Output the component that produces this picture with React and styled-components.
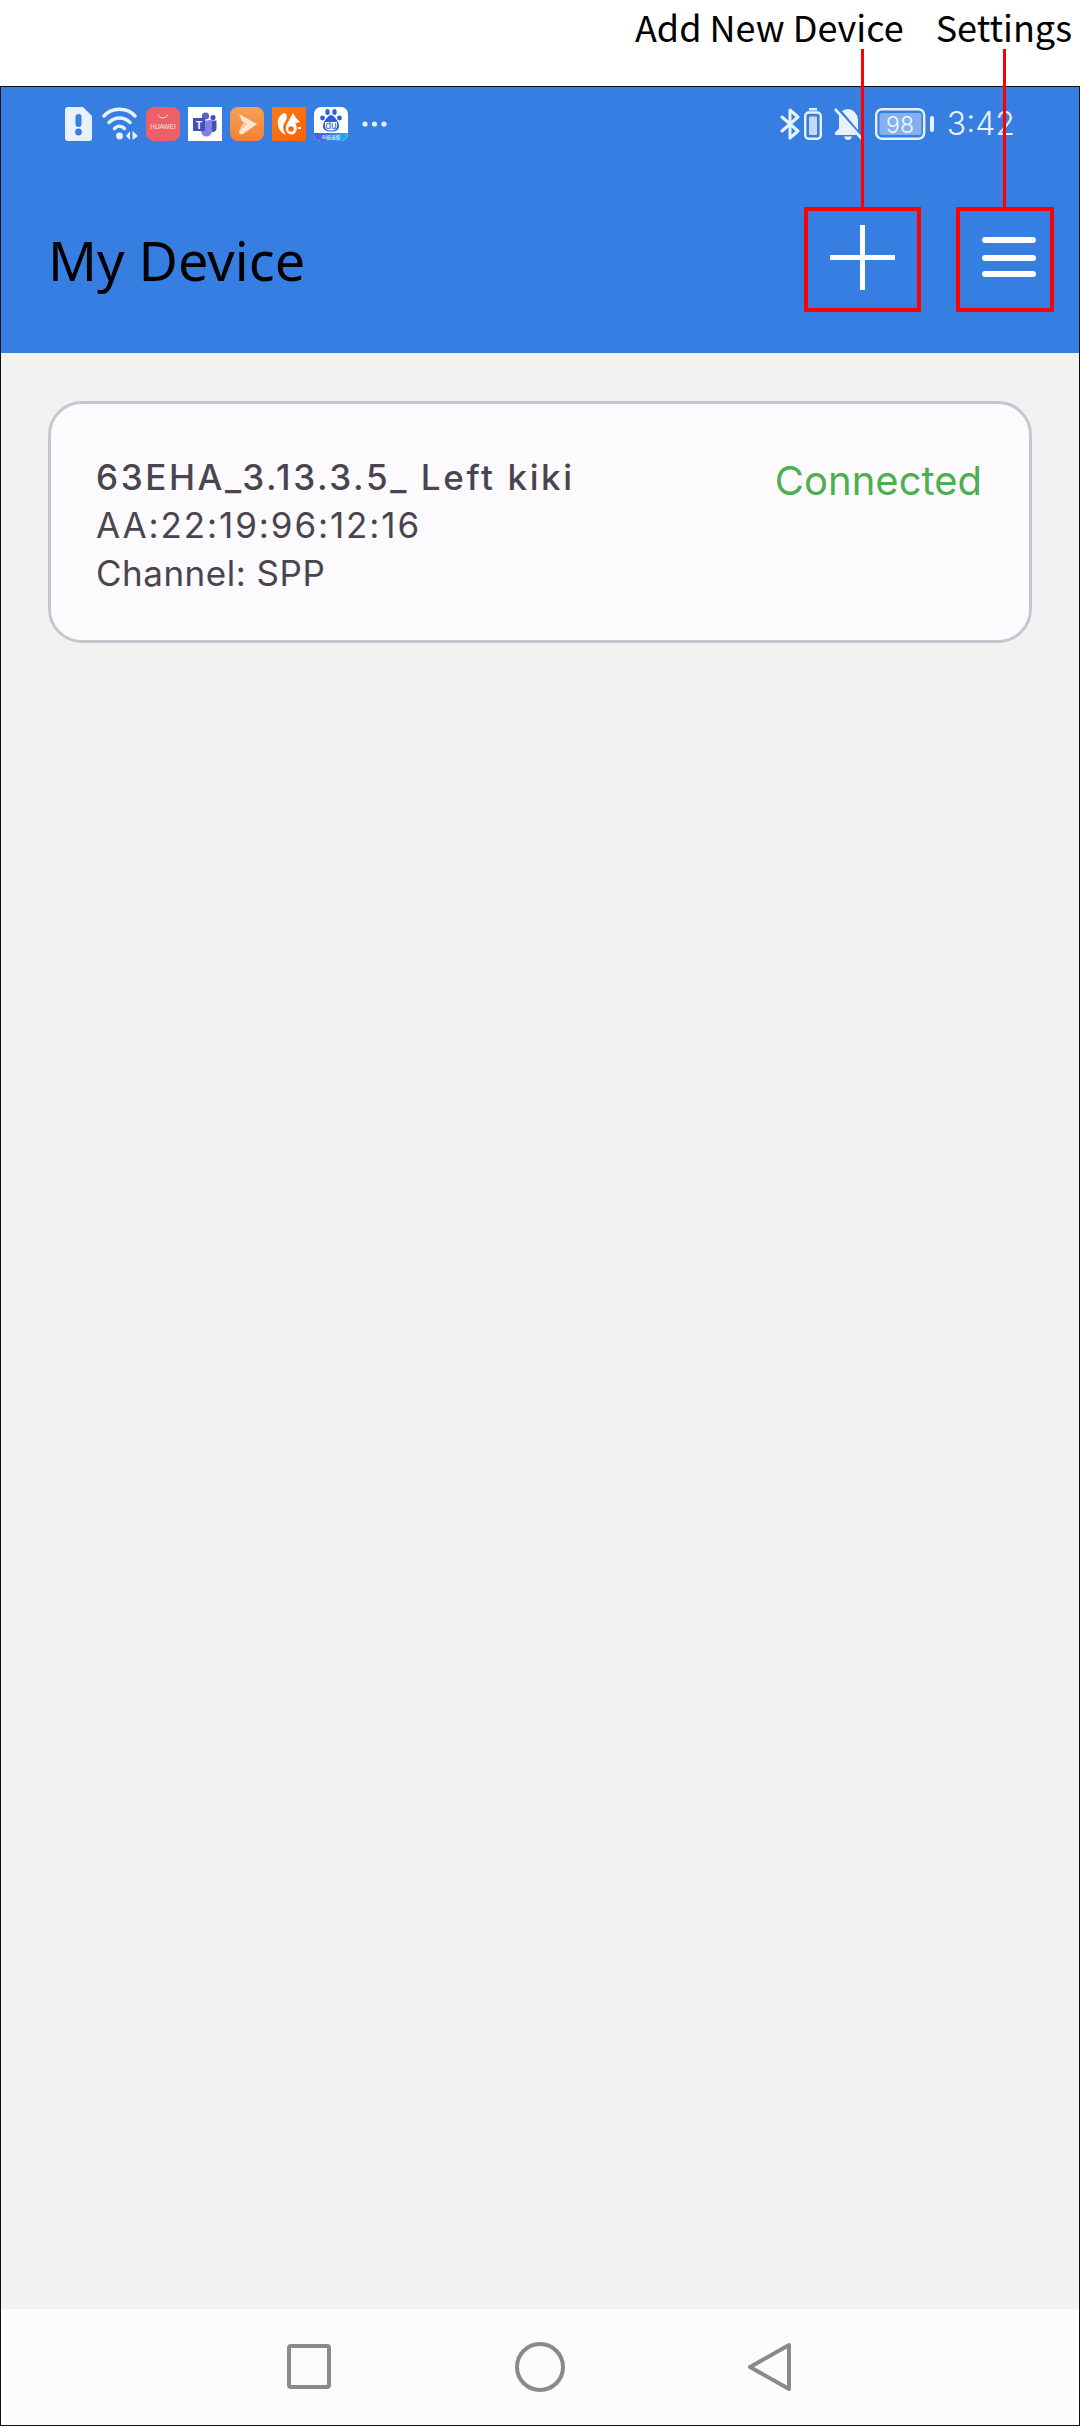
import React from 'react'
import styled, { createGlobalStyle } from 'styled-components'

const GlobalStyle = createGlobalStyle`
  html, body {
    margin: 0;
    padding: 0;
    background: #fff;
  }
  * {
    box-sizing: border-box;
  }
`

const Page = styled.div`
  display: flex;
  flex-direction: column;
  width: 1080px;
  height: 2426px;
  background: #fff;
  overflow: hidden;
`

const CalloutBand = styled.div`
  display: flex;
  justify-content: flex-end;
  gap: 32px;
  height: 86px;
  padding: 1px 8px 0 0;
  flex-shrink: 0;
`

const CalloutLabel = styled.div`
  font-family: "Noto Sans CJK SC", "Noto Sans", sans-serif;
  font-size: 36px;
  line-height: 50px;
  color: #000;
  white-space: nowrap;
`

const Screen = styled.div`
  display: flex;
  flex-direction: column;
  flex: 1;
  min-height: 0;
  border: 1.5px solid #111;
  background: #f2f2f2;
`

const Header = styled.header`
  background: #377ee3;
  height: 266px;
  flex-shrink: 0;
  display: flex;
  flex-direction: column;
`

const StatusBar = styled.div`
  display: flex;
  align-items: center;
  justify-content: space-between;
  height: 34px;
  margin-top: 20px;
  padding: 0 64px 0 64px;
`

const StatusGroup = styled.div`
  display: flex;
  align-items: center;
  gap: ${props => props.$gap || 0}px;
`

const DotsSlot = styled.div`
  display: flex;
  margin-left: 6px;
`

const Clock = styled.span`
  font-family: Inter, "Noto Sans", sans-serif;
  font-size: 32px;
  font-weight: 300;
  line-height: 34px;
  color: #e8f1fc;
  margin-left: 1px;
`

const AppBar = styled.div`
  display: flex;
  align-items: center;
  justify-content: space-between;
  margin-top: 66px;
  padding: 0 25px 0 47px;
`

const Title = styled.h1`
  margin: 0;
  font-family: "Noto Sans", sans-serif;
  font-size: 54px;
  font-weight: 400;
  line-height: 58px;
  color: #000;
`

const Actions = styled.div`
  display: flex;
  gap: 35px;
`

const ActionButton = styled.div`
  position: relative;
  display: flex;
  align-items: center;
  justify-content: center;
  width: ${props => props.$width}px;
  height: 105px;
  padding: 0 0 5px ${props => props.$shift || 0}px;
  border: 4px solid #f00;
`

const Connector = styled.span`
  position: absolute;
  left: 50%;
  bottom: 100%;
  width: 3px;
  height: 158px;
  margin-left: -2px;
  margin-bottom: 4px;
  background: #f00;
`

const Content = styled.main`
  flex: 1;
  padding: 48px 47px 0 47px;
`

const Card = styled.section`
  display: flex;
  justify-content: space-between;
  align-items: flex-start;
  height: 242px;
  padding: 49px 47px 0 45px;
  background: #fdfafe;
  border: 3px solid #c9c5d0;
  border-radius: 34px;
`

const CardInfo = styled.div`
  display: flex;
  flex-direction: column;
`

const DeviceName = styled.div`
  font-family: Inter, "Noto Sans", sans-serif;
  font-size: 35px;
  font-weight: 500;
  line-height: 48px;
  letter-spacing: 2.6px;
  color: #49454f;
`

const DeviceMeta = styled.div`
  font-family: Inter, "Noto Sans", sans-serif;
  font-size: 35px;
  font-weight: 400;
  line-height: 48px;
  letter-spacing: ${props => props.$spacing || 0}px;
  color: #49454f;
`

const DeviceStatus = styled.div`
  font-family: Inter, "Noto Sans", sans-serif;
  font-size: 40px;
  font-weight: 400;
  line-height: 56px;
  color: #4caf50;
`

const NavBar = styled.nav`
  display: flex;
  align-items: center;
  justify-content: center;
  gap: 183px;
  height: 116px;
  flex-shrink: 0;
  background: #fcfcfc;
`

const AlertIcon = () => (
  <svg width="27" height="34" viewBox="0 0 27 34">
    <path d="M3 0H18L27 9V31a3 3 0 0 1-3 3H3a3 3 0 0 1-3-3V3a3 3 0 0 1 3-3Z" fill="#e8f1fc" />
    <rect x="10.5" y="7" width="6" height="13" rx="3" fill="#377ee3" />
    <circle cx="13.5" cy="25" r="3.4" fill="#377ee3" />
  </svg>
)

const WifiIcon = () => (
  <svg width="36" height="34" viewBox="0 0 36 34" fill="none">
    <path d="M2 9C10 0 25 0 33 9" stroke="#e8f1fc" strokeWidth="3.4" strokeLinecap="round" />
    <path d="M7 15.5C13 9.5 22 9.5 28 15.5" stroke="#e8f1fc" strokeWidth="3.4" strokeLinecap="round" />
    <path d="M12.5 21.5C15.5 18.5 19.5 18.5 22.5 21.5" stroke="#e8f1fc" strokeWidth="3.4" strokeLinecap="round" />
    <circle cx="17.5" cy="29" r="3.4" fill="#e8f1fc" />
    <path d="M28 24V33L24 29Z M30.5 24V33L36 29Z" fill="#e8f1fc" />
  </svg>
)

const HuaweiIcon = () => (
  <svg width="34" height="34" viewBox="0 0 34 34">
    <rect width="34" height="34" rx="8" fill="#ee5f68" />
    <path d="M12 7.5C13 12 21 12 22 7.5" stroke="#fbe3e4" strokeWidth="1" fill="none" />
    <text x="17" y="22" textAnchor="middle" fontFamily="Liberation Sans, sans-serif" fontSize="6.4" fill="#fbe3e4">HUAWEI</text>
  </svg>
)

const TeamsIcon = () => (
  <svg width="34" height="34" viewBox="0 0 34 34">
    <rect width="34" height="34" fill="#fff" />
    <circle cx="17.5" cy="9" r="3.6" fill="#5a62c4" />
    <circle cx="25" cy="10.5" r="2.6" fill="#4a52b0" />
    <path d="M20 13.5H28.5V21a4 4 0 0 1-8 0Z" fill="#4a52b0" />
    <path d="M13 13.5H24V24a5.5 5.5 0 0 1-11 0Z" fill="#7b83eb" />
    <rect x="5" y="11" width="12" height="13" fill="#464eb8" />
    <text x="11" y="21.5" textAnchor="middle" fontFamily="Liberation Sans, sans-serif" fontSize="10" fontWeight="700" fill="#fff">T</text>
  </svg>
)

const PlayIcon = () => (
  <svg width="34" height="34" viewBox="0 0 34 34">
    <defs>
      <linearGradient id="playBg" x1="0" y1="0" x2="0" y2="1">
        <stop offset="0" stopColor="#f7a05a" />
        <stop offset="1" stopColor="#f4812f" />
      </linearGradient>
    </defs>
    <rect width="34" height="34" rx="8" fill="url(#playBg)" />
    <path d="M9 7L27 17L13 27Q9 28 9 24L17 17L12 14Z" fill="#fde6d4" />
    <path d="M9 24L14 14L17 17Z" fill="#fbc9a5" />
  </svg>
)

const SquirrelIcon = () => (
  <svg width="34" height="34" viewBox="0 0 34 34">
    <defs>
      <linearGradient id="squirrelBg" x1="0" y1="0" x2="1" y2="1">
        <stop offset="0" stopColor="#f57c1f" />
        <stop offset="1" stopColor="#ff5f00" />
      </linearGradient>
    </defs>
    <rect width="34" height="34" fill="url(#squirrelBg)" />
    <path d="M13 6C8 7 5 12 6 18C7 24 11 27 14 28C11 23 10 19 13 15C15 13 16 8 13 6Z" fill="#fff" />
    <path d="M15 17L21 6L24 11L28 15L23 16.5C26 20 25 25 22 27C18 28.5 14 26 14 21.5C14 19.5 14 18 15 17Z" fill="#fff" />
    <circle cx="19" cy="22" r="2.8" fill="#f86b08" />
    <rect x="26" y="20" width="3" height="2" fill="#fff" />
  </svg>
)

const BaiduIcon = () => (
  <svg width="34" height="34" viewBox="0 0 34 34">
    <defs>
      <clipPath id="baiduClip">
        <rect width="34" height="34" rx="7" />
      </clipPath>
      <linearGradient id="baiduBand" x1="0" y1="0" x2="1" y2="0">
        <stop offset="0" stopColor="#4a55e8" />
        <stop offset="1" stopColor="#18b4f2" />
      </linearGradient>
    </defs>
    <g clipPath="url(#baiduClip)">
      <rect width="34" height="34" fill="#fff" />
      <rect y="26" width="34" height="8" fill="url(#baiduBand)" />
      <ellipse cx="13.5" cy="5" rx="2.2" ry="3" fill="#2a5fe0" />
      <ellipse cx="20.5" cy="5" rx="2.2" ry="3" fill="#2a5fe0" />
      <circle cx="8.5" cy="11" r="2.4" fill="#2a5fe0" />
      <circle cx="25.5" cy="11" r="2.4" fill="#2a5fe0" />
      <path d="M17 8C20 8 25 15 25 19C25 23 22 24.5 17 24.5C12 24.5 9 23 9 19C9 15 14 8 17 8Z" fill="#2a5fe0" />
      <path d="M11 15H23V19C23 22 21 23.5 17 23.5C13 23.5 11 22 11 19Z" fill="#fff" />
      <text x="17" y="22" textAnchor="middle" fontFamily="Liberation Sans, sans-serif" fontSize="10" fill="#2a5fe0">du</text>
      <text x="17" y="32" textAnchor="middle" fontFamily="Noto Sans CJK SC, sans-serif" fontSize="4.8" fill="#fff">AI极速版</text>
    </g>
  </svg>
)

const MoreDots = () => (
  <svg width="25" height="6" viewBox="0 0 25 6">
    <circle cx="3" cy="3" r="2.6" fill="#e8f1fc" />
    <circle cx="12.5" cy="3" r="2.6" fill="#e8f1fc" />
    <circle cx="22" cy="3" r="2.6" fill="#e8f1fc" />
  </svg>
)

const BluetoothIcon = () => (
  <svg width="20" height="32" viewBox="0 0 20 32" fill="none" stroke="#e8f1fc" strokeWidth="3" strokeLinejoin="round" strokeLinecap="round">
    <path d="M2 9L18 23L10 30V2L18 9L2 23" />
  </svg>
)

const SmallBattery = () => (
  <svg width="18" height="32" viewBox="0 0 18 32" fill="none">
    <rect x="5" y="0" width="8" height="2.5" fill="#e8f1fc" />
    <rect x="1.2" y="4.5" width="15.6" height="26.3" rx="3.5" stroke="#e8f1fc" strokeWidth="2.4" />
    <rect x="5" y="8.5" width="8" height="18.5" rx="1" fill="#c4d9f7" />
  </svg>
)

const MutedBell = () => (
  <svg width="29" height="32" viewBox="0 0 29 32">
    <path d="M2 0L29 30L27 32L0 2Z" fill="#e8f1fc" />
    <path d="M5 6L23 27H1V24.5L5 20.5Z" fill="#e8f1fc" />
    <path d="M8 3Q11 1 14 1Q23 2 24 12V22Z" fill="#e8f1fc" />
    <path d="M10 28.5H18Q17 32 14 32Q11 32 10 28.5Z" fill="#e8f1fc" />
  </svg>
)

const BatteryIcon = () => (
  <svg width="59" height="32" viewBox="0 0 59 32">
    <rect x="1.2" y="1.2" width="48" height="29.6" rx="6" fill="none" stroke="#e8f1fc" strokeWidth="2.4" />
    <rect x="4.5" y="5" width="42" height="22" rx="2.5" fill="#85b0ef" />
    <rect x="55" y="8" width="4" height="16" rx="2" fill="#e8f1fc" />
    <text x="25" y="24.5" textAnchor="middle" fontFamily="Inter, sans-serif" fontSize="23" fontWeight="300" fill="#f2f7fe">98</text>
  </svg>
)

const PlusIcon = () => (
  <svg width="65" height="65" viewBox="0 0 65 65">
    <rect x="30" y="0" width="5" height="65" fill="#fff" />
    <rect x="0" y="30" width="65" height="5" fill="#fff" />
  </svg>
)

const MenuIcon = () => (
  <svg width="54" height="40" viewBox="0 0 54 40">
    <rect y="0" width="54" height="6" rx="3" fill="#fff" />
    <rect y="18" width="54" height="6" rx="3" fill="#fff" />
    <rect y="34" width="54" height="6" rx="3" fill="#fff" />
  </svg>
)

const NavIcon = ({ kind }) => (
  <svg width="50" height="50" viewBox="0 0 50 50" fill="none" stroke="#8a8a8a" strokeWidth="4" strokeLinejoin="round">
    {kind === 'square' && <rect x="7" y="4" width="40" height="41" rx="2" />}
    {kind === 'circle' && <circle cx="25" cy="25" r="23" />}
    {kind === 'back' && <path d="M41 3V47L2 25Z" />}
  </svg>
)

export default function App() {
  return (
    <Page>
      <GlobalStyle />
      <CalloutBand>
        <CalloutLabel>Add New Device</CalloutLabel>
        <CalloutLabel>Settings</CalloutLabel>
      </CalloutBand>
      <Screen>
        <Header>
          <StatusBar>
            <StatusGroup $gap={8}>
              <StatusGroup $gap={10}>
                <AlertIcon />
                <WifiIcon />
              </StatusGroup>
              <HuaweiIcon />
              <TeamsIcon />
              <PlayIcon />
              <SquirrelIcon />
              <BaiduIcon />
              <DotsSlot>
                <MoreDots />
              </DotsSlot>
            </StatusGroup>
            <StatusGroup $gap={12}>
              <StatusGroup $gap={4}>
                <BluetoothIcon />
                <SmallBattery />
              </StatusGroup>
              <MutedBell />
              <BatteryIcon />
              <Clock>3:42</Clock>
            </StatusGroup>
          </StatusBar>
          <AppBar>
            <Title>My Device</Title>
            <Actions>
              <ActionButton $width={117}>
                <Connector />
                <PlusIcon />
              </ActionButton>
              <ActionButton $width={98} $shift={8}>
                <Connector />
                <MenuIcon />
              </ActionButton>
            </Actions>
          </AppBar>
        </Header>
        <Content>
          <Card>
            <CardInfo>
              <DeviceName>63EHA_3.13.3.5_ Left kiki</DeviceName>
              <DeviceMeta $spacing={1.9}>AA:22:19:96:12:16</DeviceMeta>
              <DeviceMeta $spacing={0.5}>Channel: SPP</DeviceMeta>
            </CardInfo>
            <DeviceStatus>Connected</DeviceStatus>
          </Card>
        </Content>
        <NavBar>
          <NavIcon kind="square" />
          <NavIcon kind="circle" />
          <NavIcon kind="back" />
        </NavBar>
      </Screen>
    </Page>
  )
}
